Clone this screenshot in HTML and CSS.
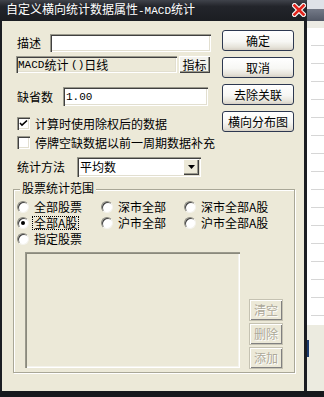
FILE: index.html
```html
<!DOCTYPE html>
<html>
<head>
<meta charset="utf-8">
<link rel="stylesheet" href="styles.css">
</head>
<body>
<div class="screen">
  <div class="window">
    <div class="titlebar">
      <span class="title">自定义横向统计数据属性<span class="mono">-MACD</span>统计</span>
      <svg class="close" viewBox="0 0 14 14" width="14" height="14">
        <path d="M2.5 2.5L11.5 11.5M11.5 2.5L2.5 11.5" stroke="#f4f4f4" stroke-width="5" stroke-linecap="square"/>
        <path d="M2.5 2.5L11.5 11.5M11.5 2.5L2.5 11.5" stroke="#e3241c" stroke-width="2.6" stroke-linecap="square"/>
      </svg>
    </div>
    <div class="client">
      <div class="top">
        <div class="form">
          <div class="row r1"><span class="lbl l1">描述</span><div class="field f1"></div></div>
          <div class="row r2"><div class="ro"><span class="mono">MACD</span>统计 <span class="mono">()</span>日线</div><div class="cbtn">指标</div></div>
          <div class="row r3"><span class="lbl l3">缺省数</span><div class="field f3"><span class="mono">1.00</span></div></div>
          <div class="row r4"><span class="chk"><svg viewBox="0 0 13 13" width="13" height="13"><path d="M3 6l2 2.2L10 3.5" fill="none" stroke="#000" stroke-width="1.6"/></svg></span><span class="ctext">计算时使用除权后的数据</span></div>
          <div class="row r5"><span class="chk"></span><span class="ctext">停牌空缺数据以前一周期数据补充</span></div>
          <div class="row r6"><span class="lbl l6">统计方法</span><div class="select"><span class="sval">平均数</span><span class="sarrow"><svg viewBox="0 0 7 4" width="7" height="4"><path d="M0 0h7L3.5 4z" fill="#000"/></svg></span></div></div>
        </div>
        <div class="actions">
          <div class="xbtn">确定</div>
          <div class="xbtn">取消</div>
          <div class="xbtn">去除关联</div>
          <div class="xbtn">横向分布图</div>
        </div>
      </div>
      <div class="group">
        <div class="legend">股票统计范围</div>
        <div class="radios">
          <div class="ritem"><span class="radio"></span><span class="rtext">全部股票</span></div>
          <div class="ritem"><span class="radio"></span><span class="rtext">深市全部</span></div>
          <div class="ritem"><span class="radio"></span><span class="rtext">深市全部A股</span></div>
          <div class="ritem"><span class="radio on"></span><span class="rtext focus">全部A股</span></div>
          <div class="ritem"><span class="radio"></span><span class="rtext">沪市全部</span></div>
          <div class="ritem"><span class="radio"></span><span class="rtext">沪市全部A股</span></div>
          <div class="ritem"><span class="radio"></span><span class="rtext">指定股票</span></div>
        </div>
        <div class="listarea">
          <div class="listbox"></div>
          <div class="sidebtns">
            <div class="dbtn">清空</div>
            <div class="dbtn">删除</div>
            <div class="dbtn">添加</div>
          </div>
        </div>
      </div>
    </div>
  </div>
  <div class="behind">
    <div class="b-top"></div>
    <div class="b-bar"></div>
    <div class="b-gap"></div>
    <div class="b-grid"></div>
    <div class="b-foot"><span class="b-tick"></span></div>
  </div>
</div>
</body>
</html>
```

FILE: styles.css
```css
* { box-sizing: border-box; margin: 0; padding: 0; }
html, body { width: 324px; height: 397px; overflow: hidden; }
body {
  background: #16181c;
  font: 12px/14px "Noto Sans CJK SC", "Noto Sans CJK JP", sans-serif;
  color: #000;
}
.mono { font-family: "Liberation Mono", monospace; font-size: 11px; }

.screen { display: flex; height: 391px; }
.window { width: 307px; display: flex; flex-direction: column; }

.titlebar {
  height: 21px;
  display: flex;
  align-items: center;
  padding-left: 6px;
  color: #fff;
  white-space: nowrap;
  background: linear-gradient(#40434b, #23252b 30%, #1b1d22);
}
.title { margin-top: -1px; }
.close { margin-left: auto; margin-right: 1px; margin-top: -1px; }

.client {
  flex: 1;
  background: #ece9d8;
  border-left: 2px solid #1b1d22;
  border-right: 3px solid #1b1d22;
}

.top { display: flex; }
.form {
  margin-left: 14px;
  width: 195px;
  padding-top: 13px;
  display: flex;
  flex-direction: column;
}
.row { display: flex; align-items: center; white-space: nowrap; }
.lbl { padding-left: 1px; flex: none; }
.l1 { width: 34px; }
.l3 { width: 47px; }
.l6 { width: 61px; }

.field {
  background: #fff;
  box-shadow: inset 1px 1px #9a998c, inset 2px 2px #404040, inset -1px -1px #fff, inset -2px -2px #e2dfd0;
  display: flex;
  align-items: center;
  padding-left: 4px;
}
.r1 { height: 18px; }
.f1 { width: 161px; height: 18px; }
.r2 { margin-top: 4px; height: 17px; }
.ro {
  width: 161px;
  height: 17px;
  padding-left: 2px;
  display: flex;
  align-items: center;
  white-space: pre;
  background: #ece9d8;
  box-shadow: inset 1px 1px #9a998c, inset 2px 2px #404040, inset -1px -1px #fff, inset -2px -2px #e2dfd0;
}
.cbtn {
  margin-left: 2px;
  width: 31px;
  height: 17px;
  display: flex;
  align-items: center;
  justify-content: center;
  background: #f3f2ec;
  box-shadow: inset 1px 1px #fff, inset -1px -1px #404040, inset -2px -2px #9a998c;
}
.r3 { margin-top: 14px; height: 19px; }
.f3 { width: 145px; height: 19px; padding-left: 3px; }

.r4 { margin-top: 11px; height: 13px; padding-left: 1px; }
.r5 { margin-top: 6px; height: 13px; padding-left: 1px; }
.chk {
  width: 13px;
  height: 13px;
  flex: none;
  background: #fff;
  box-shadow: inset 1px 1px #9a998c, inset 2px 2px #404040, inset -1px -1px #fff, inset -2px -2px #e2dfd0;
}
.chk svg { display: block; }
.ctext { margin-left: 5px; }

.r6 { margin-top: 8px; height: 20px; }
.select {
  width: 124px;
  height: 20px;
  background: #fff;
  display: flex;
  align-items: center;
  padding: 0 2px 0 3px;
  box-shadow: inset 1px 1px #9a998c, inset 2px 2px #404040, inset -1px -1px #fff, inset -2px -2px #e2dfd0;
}
.sval { flex: 1; }
.sarrow {
  width: 16px;
  height: 16px;
  display: flex;
  align-items: center;
  justify-content: center;
  background: #ece9d8;
  box-shadow: inset 1px 1px #fff, inset -1px -1px #404040, inset -2px -2px #9a998c;
}
.sarrow svg { display: block; }

.actions {
  margin-left: 11px;
  padding-top: 9px;
  width: 72px;
  display: flex;
  flex-direction: column;
  gap: 6px;
}
.xbtn {
  height: 21px;
  border: 1px solid #2d3850;
  border-radius: 3px;
  display: flex;
  align-items: center;
  justify-content: center;
  white-space: nowrap;
  background: linear-gradient(#ffffff, #f7f7f4 55%, #e6e3da 85%, #d6d0c5);
}

.group {
  margin: 12px 0 0 11px;
  width: 282px;
  border: 1px solid #a9a797;
  box-shadow: inset 1px 1px #fff, 1px 1px #fff;
  padding-bottom: 4px;
}
.legend {
  width: fit-content;
  margin: -9px 0 0 6px;
  padding: 0 2px;
  background: #ece9d8;
}
.radios {
  margin-top: 4px;
  padding-left: 3px;
  display: grid;
  grid-template-columns: 84px 83px auto;
  grid-auto-rows: 16px;
}
.ritem { display: flex; align-items: center; white-space: nowrap; }
.radio {
  width: 12px;
  height: 12px;
  flex: none;
  border-radius: 50%;
  background: #fff;
  border: 1px solid;
  border-color: #8c8b80 #f4f3ee #f4f3ee #8c8b80;
  box-shadow: inset 1px 1px #404040;
  display: flex;
  align-items: center;
  justify-content: center;
}
.radio.on::after {
  content: "";
  width: 4px;
  height: 4px;
  border-radius: 50%;
  background: #000;
}
.rtext { margin-left: 5px; }
.rtext.focus {
  margin-left: 3px;
  padding: 0 1px;
  border: 1px dotted #000;
  line-height: 12px;
}

.listarea {
  margin-top: 5px;
  padding-left: 11px;
  display: flex;
}
.listbox {
  width: 215px;
  height: 116px;
  background: #ece9d8;
  box-shadow: inset 1px 1px #9a998c, inset 2px 2px #8a897c, inset -1px -1px #fff, inset -2px -2px #f4f3ec;
}
.sidebtns {
  margin-left: 10px;
  width: 32px;
  display: flex;
  flex-direction: column;
  justify-content: flex-end;
  gap: 4px;
}
.dbtn {
  height: 20px;
  display: flex;
  align-items: center;
  justify-content: center;
  color: #aca899;
  text-shadow: 1px 1px #fff;
  background: #ece9d8;
  box-shadow: inset 1px 1px #fff, inset -1px -1px #808080, 0 0 0 1px #c5c2b2;
}

.behind { width: 17px; display: flex; flex-direction: column; }
.b-top { height: 9px; background: #dfe2e8; }
.b-bar { height: 12px; background: linear-gradient(#747a88, #525866); }
.b-gap { height: 7px; background: #ecebe4; }
.b-grid {
  height: 297px;
  background-color: #fff;
  background-image: repeating-linear-gradient(#fff 0, #fff 17px, #d6d6d6 17px, #d6d6d6 18px);
  background-position: 3px 0;
  background-repeat: repeat-y;
  border-left: 1px solid #fff;
}
.b-foot {
  flex: 1;
  background: #ecebe0;
  padding-top: 15px;
}
.b-tick { display: block; width: 2px; height: 17px; background: #1c3a6c; }
```
